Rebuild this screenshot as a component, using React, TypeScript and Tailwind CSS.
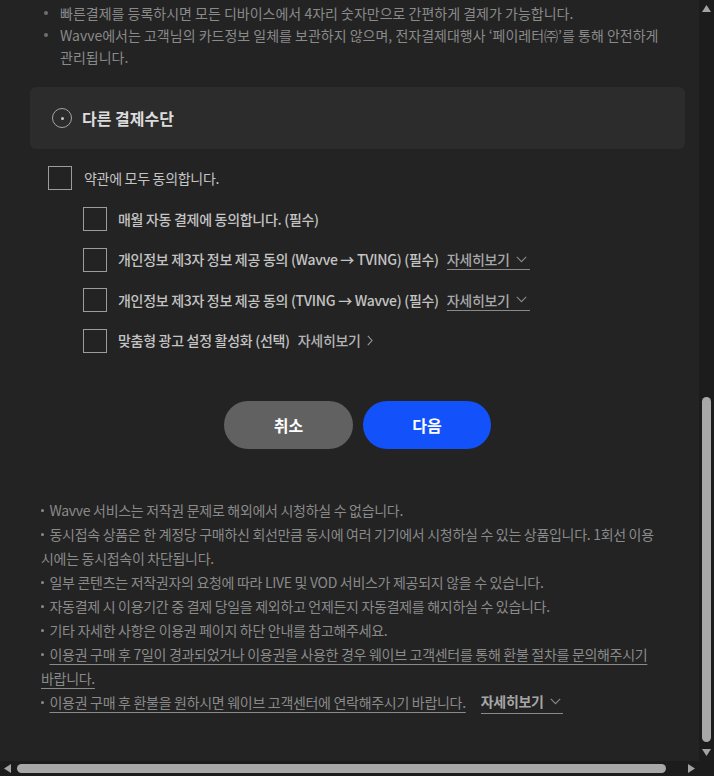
import React from 'react'

const font = { fontFamily: '"Noto Sans CJK KR", "Noto Sans", sans-serif' }

function Check() {
  return <span className="block h-[24px] w-[24px] shrink-0 border-[1.5px] border-[#9c9c9c]" />
}

function ChevDown() {
  return (
    <svg width="11" height="7" viewBox="0 0 11 7">
      <polyline points="0.8,0.8 5.5,5.6 10.2,0.8" fill="none" stroke="#8a8a8a" strokeWidth="1.1" />
    </svg>
  )
}

function ChevRight() {
  return (
    <svg width="6" height="11" viewBox="0 0 6 11">
      <polyline points="0.8,0.8 5,5.5 0.8,10.2" fill="none" stroke="#9a9a9a" strokeWidth="1.1" />
    </svg>
  )
}

function MoreLink() {
  return (
    <span className="ml-[8px] inline-flex items-center gap-[6px] border-b border-[#8a8a8a] pr-[3px] leading-[20px] text-[#a8a8a8]">
      자세히보기
      <ChevDown />
    </span>
  )
}

function Dot() {
  return (
    <span className="inline-block w-[8.5px] align-middle">
      <span className="mb-[3px] block h-[3px] w-[3px] rounded-full bg-[#8a8a8a]" />
    </span>
  )
}

const terms = [
  { label: '매월 자동 결제에 동의합니다. (필수)', more: null },
  { label: '개인정보 제3자 정보 제공 동의 (Wavve → TVING) (필수)', more: 'down' },
  { label: '개인정보 제3자 정보 제공 동의 (TVING → Wavve) (필수)', more: 'down' },
  { label: '맞춤형 광고 설정 활성화 (선택)', more: 'right' },
]

const notes = [
  'Wavve 서비스는 저작권 문제로 해외에서 시청하실 수 없습니다.',
  '동시접속 상품은 한 계정당 구매하신 회선만큼 동시에 여러 기기에서 시청하실 수 있는 상품입니다. 1회선 이용 시에는 동시접속이 차단됩니다.',
  '일부 콘텐츠는 저작권자의 요청에 따라 LIVE 및 VOD 서비스가 제공되지 않을 수 있습니다.',
  '자동결제 시 이용기간 중 결제 당일을 제외하고 언제든지 자동결제를 해지하실 수 있습니다.',
  '기타 자세한 사항은 이용권 페이지 하단 안내를 참고해주세요.',
]

export default function App() {
  return (
    <div className="flex h-[776px] w-[714px] flex-col overflow-hidden bg-[#232323] break-keep" style={font}>
      <div className="flex min-h-0 flex-1">
        {/* page content */}
        <div className="min-w-0 flex-1 overflow-hidden pl-[30px] pr-[14px]">
          <ul className="mt-[2px] text-[14px] leading-[22px] text-[#8a8a8a]">
            <li className="flex">
              <span className="flex w-[30px] shrink-0 pl-[14px] pt-[9px]">
                <span className="block h-[4px] w-[4px] rounded-full bg-[#6e6e6e]" />
              </span>
              <span>빠른결제를 등록하시면 모든 디바이스에서 4자리 숫자만으로 간편하게 결제가 가능합니다.</span>
            </li>
            <li className="flex">
              <span className="flex w-[30px] shrink-0 pl-[14px] pt-[9px]">
                <span className="block h-[4px] w-[4px] rounded-full bg-[#6e6e6e]" />
              </span>
              <span>Wavve에서는 고객님의 카드정보 일체를 보관하지 않으며, 전자결제대행사 ‘페이레터㈜’를 통해 안전하게 관리됩니다.</span>
            </li>
          </ul>

          <div className="mt-[19px] flex h-[62px] items-center gap-[10px] rounded-[6px] bg-[#2c2c2c] pl-[22px]">
            <span className="flex h-[20px] w-[20px] items-center justify-center rounded-full border-[1.5px] border-[#a6a6a6]">
              <span className="block h-[3px] w-[3px] rounded-full bg-[#c8c8c8]" />
            </span>
            <span className="text-[16px] font-bold text-[#dcdcdc]">다른 결제수단</span>
          </div>

          <div className="mt-[17px] flex h-[24px] items-center gap-[12px] pl-[18px] text-[14px] tracking-[-0.3px] text-[#c4c4c4]">
            <Check />
            <span>약관에 모두 동의합니다.</span>
          </div>

          <div className="mt-[17px] flex flex-col gap-[16.5px] pl-[53px]">
            {terms.map((t) => (
              <div key={t.label} className="flex h-[24px] items-center gap-[11px] text-[14px] font-medium tracking-[-0.3px] text-[#c4c4c4]">
                <Check />
                <span className="flex items-center">
                  {t.label}
                  {t.more === 'down' && <MoreLink />}
                  {t.more === 'right' && (
                    <span className="ml-[8px] inline-flex items-center gap-[6px] text-[#b4b4b4]">
                      자세히보기
                      <ChevRight />
                    </span>
                  )}
                </span>
              </div>
            ))}
          </div>

          <div className="mt-[48px] flex justify-center gap-[10px]">
            <button className="h-[48px] w-[129px] rounded-full bg-[#616161] text-[16px] font-bold text-white">취소</button>
            <button className="h-[48px] w-[128px] rounded-full bg-[#1352fb] text-[16px] font-bold text-white">다음</button>
          </div>

          <div className="mt-[49px] pl-[11px] text-[14px] leading-[24px] tracking-[-0.3px] text-[#8a8a8a]">
            {notes.map((n) => (
              <p key={n}>
                <Dot />
                {n}
              </p>
            ))}
            <p>
              <Dot />
              <span className="underline decoration-[#8a8a8a] underline-offset-[4px]">
                이용권 구매 후 7일이 경과되었거나 이용권을 사용한 경우 웨이브 고객센터를 통해 환불 절차를 문의해주시기 바랍니다.
              </span>
            </p>
            <p>
              <Dot />
              <span className="underline decoration-[#8a8a8a] underline-offset-[4px]">
                이용권 구매 후 환불을 원하시면 웨이브 고객센터에 연락해주시기 바랍니다.
              </span>
              <span className="ml-[15px] inline-flex items-center gap-[6px] border-b border-[#8a8a8a] pr-[2px] align-top font-bold leading-[23px] text-[#a6a6a6]">
                자세히보기
                <ChevDown />
              </span>
            </p>
          </div>
        </div>

        {/* vertical scrollbar */}
        <div className="flex w-[15px] shrink-0 flex-col items-center bg-[#1c1c1c] pt-[5px] pb-[5px]">
          <svg width="9" height="7" viewBox="0 0 9 7">
            <polygon points="4.5,0 9,7 0,7" fill="#a3a3a3" />
          </svg>
          <div className="flex-1" />
          <div className="h-[345px] w-[9px] rounded-full bg-[#a8a8a8]" />
          <div className="h-[7px]" />
          <svg width="9" height="7" viewBox="0 0 9 7">
            <polygon points="0,0 9,0 4.5,7" fill="#a3a3a3" />
          </svg>
        </div>
      </div>

      {/* horizontal scrollbar */}
      <div className="flex h-[15px] shrink-0 items-center bg-[#1c1c1c]">
        <svg width="7" height="9" viewBox="0 0 7 9" className="ml-[4px]">
          <polygon points="7,0 7,9 0,4.5" fill="#a3a3a3" />
        </svg>
        <div className="ml-[6px] h-[9px] w-[649px] rounded-full bg-[#a8a8a8]" />
        <svg width="7" height="9" viewBox="0 0 7 9" className="ml-[22px]">
          <polygon points="0,0 7,4.5 0,9" fill="#a3a3a3" />
        </svg>
      </div>
    </div>
  )
}
